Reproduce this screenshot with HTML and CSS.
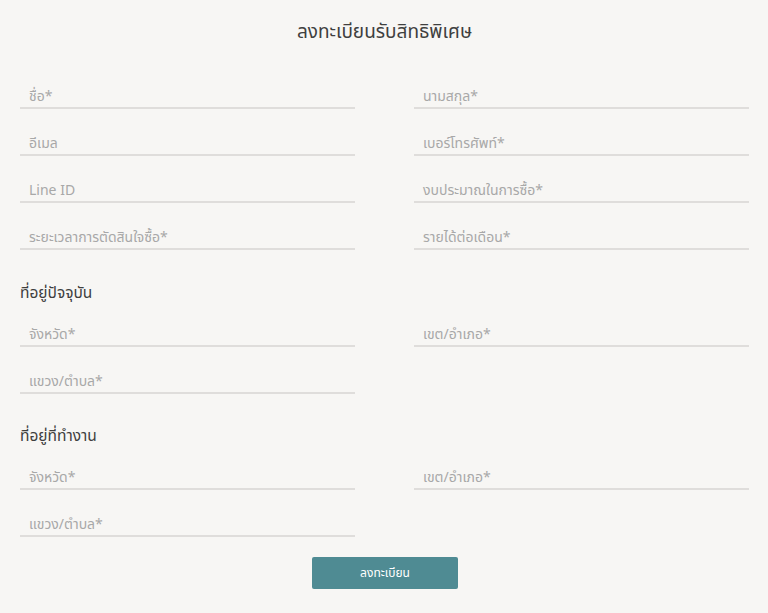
FILE: index.html
```html
<!DOCTYPE html>
<html lang="th">
<head>
<meta charset="utf-8">
<link rel="stylesheet" href="styles.css">
</head>
<body>
<form class="form">
  <h1 class="title">ลงทะเบียนรับสิทธิพิเศษ</h1>
  <div class="grid">
    <div class="field"><span class="label">ชื่อ*</span></div>
    <div class="field"><span class="label">นามสกุล*</span></div>
    <div class="field"><span class="label">อีเมล</span></div>
    <div class="field"><span class="label">เบอร์โทรศัพท์*</span></div>
    <div class="field"><span class="label">Line ID</span></div>
    <div class="field"><span class="label">งบประมาณในการซื้อ*</span></div>
    <div class="field"><span class="label">ระยะเวลาการตัดสินใจซื้อ*</span></div>
    <div class="field"><span class="label">รายได้ต่อเดือน*</span></div>
  </div>
  <h2 class="section">ที่อยู่ปัจจุบัน</h2>
  <div class="grid">
    <div class="field"><span class="label">จังหวัด*</span></div>
    <div class="field"><span class="label">เขต/อำเภอ*</span></div>
    <div class="field"><span class="label">แขวง/ตำบล*</span></div>
  </div>
  <h2 class="section section-2">ที่อยู่ที่ทำงาน</h2>
  <div class="grid">
    <div class="field"><span class="label">จังหวัด*</span></div>
    <div class="field"><span class="label">เขต/อำเภอ*</span></div>
    <div class="field"><span class="label">แขวง/ตำบล*</span></div>
  </div>
  <div class="actions">
    <button type="button" class="submit">ลงทะเบียน</button>
  </div>
</form>
</body>
</html>
```
FILE: styles.css
```css
html, body {
  margin: 0;
  padding: 0;
  background: #f7f6f4;
}
body {
  font-family: "Noto Sans Thai", "Noto Sans Thai UI", "Kanit", "Prompt", "Sarabun", "Noto Sans", "DejaVu Sans", sans-serif;
  color: #444;
}
.form {
  padding: 0 19px 0 20px;
}
.title {
  margin: 0;
  padding-top: 19px;
  height: 43px;
  font-size: 19px;
  font-weight: normal;
  line-height: 28px;
  text-align: center;
  color: #3f3f3f;
}
.grid {
  display: grid;
  grid-template-columns: 335px 335px;
  column-gap: 59px;
}
.field {
  height: 45px;
  border-bottom: 2px solid #dfdddb;
  display: flex;
  align-items: flex-end;
  padding-left: 9px;
  box-sizing: content-box;
}
.label {
  font-size: 14px;
  line-height: 20px;
  padding-bottom: 0;
  color: #a8a8a8;
}
.section {
  margin: 0;
  height: 50px;
  padding-top: 34px;
  box-sizing: border-box;
  font-size: 15.5px;
  font-weight: normal;
  line-height: 20px;
  color: #3f3f3f;
}
.section-2 {
  height: 49px;
  padding-top: 33px;
}
.actions {
  display: flex;
  justify-content: center;
  padding-top: 20px;
}
.submit {
  width: 146px;
  height: 32px;
  border: 0;
  border-radius: 2px;
  background: #4f8b93;
  color: #fff;
  font-family: inherit;
  font-size: 12px;
  margin-left: 1px;
}
```
